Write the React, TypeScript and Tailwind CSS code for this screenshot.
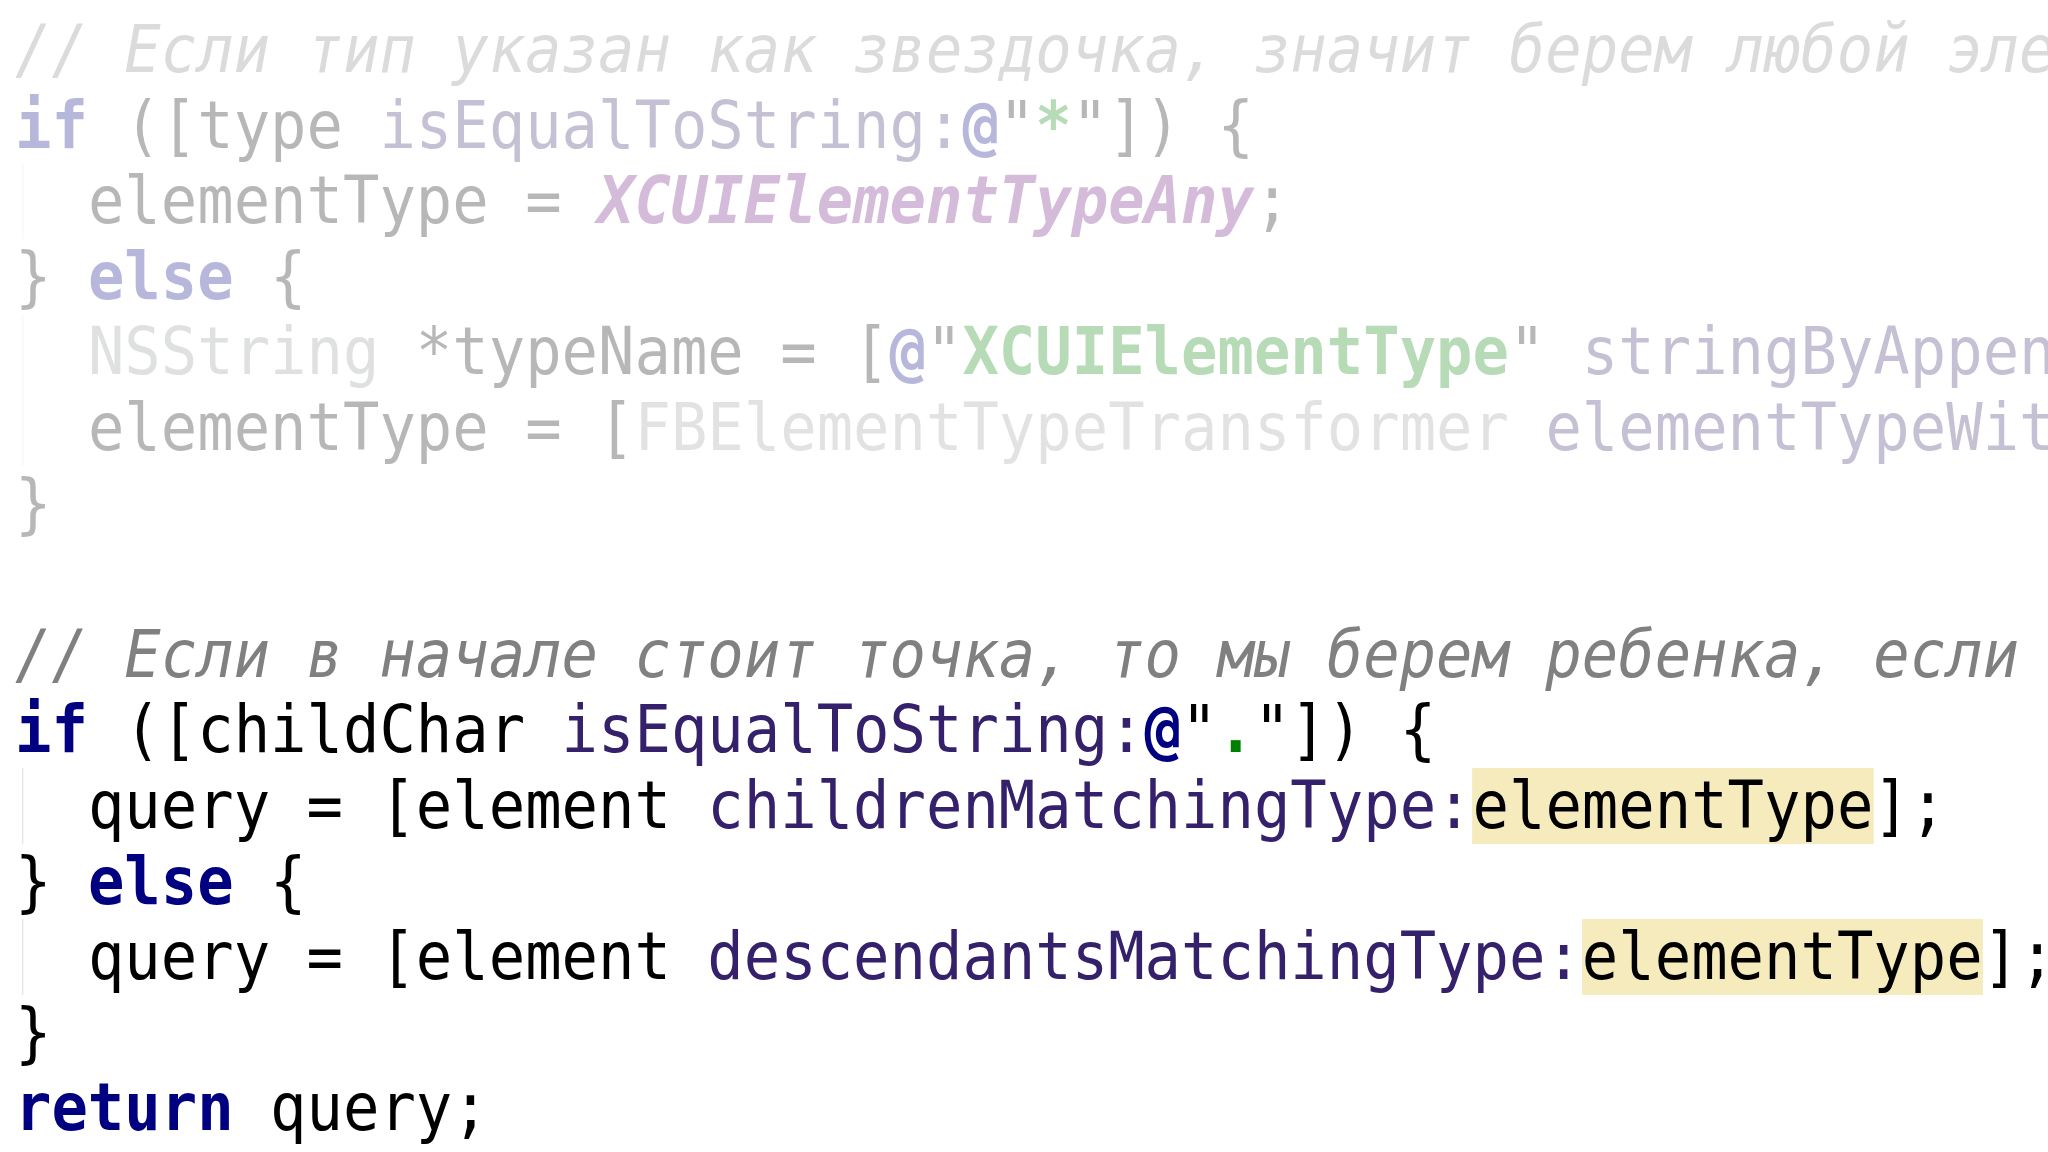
type Tok = { t: string; c?: string };

const kw = 'font-bold text-[#000080]';
const str = 'font-bold text-[#008000]';
const sel = 'text-[#35206b]';
const cmt = 'italic text-[#808080]';
const cst = 'font-bold italic text-[#660e7a]';
const cls = 'text-[#8a968f]';
const cls2 = 'text-[#9b9b9b]';
const at = 'font-bold text-[#000080]';
const hl = 'bg-[#f6ebbd]';

const IND = '__indent__';

const top: Tok[][] = [
  [{ t: '// Если тип указан как звездочка, значит берем любой элемент', c: cmt }],
  [
    { t: 'if', c: kw },
    { t: ' ([type ' },
    { t: 'isEqualToString:', c: sel },
    { t: '@', c: at },
    { t: '"' },
    { t: '*', c: str },
    { t: '"]) {' },
  ],
  [{ t: IND }, { t: 'elementType = ' }, { t: 'XCUIElementTypeAny', c: cst }, { t: ';' }],
  [{ t: '} ' }, { t: 'else', c: kw }, { t: ' {' }],
  [
    { t: IND },
    { t: 'NSString', c: cls },
    { t: ' *typeName = [' },
    { t: '@', c: at },
    { t: '"' },
    { t: 'XCUIElementType', c: str },
    { t: '" ' },
    { t: 'stringByAppendingString:', c: sel },
    { t: 'type];' },
  ],
  [
    { t: IND },
    { t: 'elementType = [' },
    { t: 'FBElementTypeTransformer', c: cls2 },
    { t: ' ' },
    { t: 'elementTypeWithTypeName:', c: sel },
    { t: 'typeName];' },
  ],
  [{ t: '}' }],
  [{ t: ' ' }],
];

const bottom: Tok[][] = [
  [{ t: '// Если в начале стоит точка, то мы берем ребенка, если нет, то любого потомка', c: cmt }],
  [
    { t: 'if', c: kw },
    { t: ' ([childChar ' },
    { t: 'isEqualToString:', c: sel },
    { t: '@', c: at },
    { t: '"' },
    { t: '.', c: str },
    { t: '"]) {' },
  ],
  [
    { t: IND },
    { t: 'query = [element ' },
    { t: 'childrenMatchingType:', c: sel },
    { t: 'elementType', c: hl },
    { t: '];' },
  ],
  [{ t: '} ' }, { t: 'else', c: kw }, { t: ' {' }],
  [
    { t: IND },
    { t: 'query = [element ' },
    { t: 'descendantsMatchingType:', c: sel },
    { t: 'elementType', c: hl },
    { t: '];' },
  ],
  [{ t: '}' }],
  [{ t: 'return', c: kw }, { t: ' query;' }],
];

function Line({ toks }: { toks: Tok[] }) {
  return (
    <div className="flex h-[75.6px] items-stretch whitespace-pre leading-[75.6px] origin-left scale-x-[0.917]">
      {toks.map((tk, i) =>
        tk.t === IND ? (
          <span key={i} className="ml-[8px] -mr-[9px] border-l border-[#dcdcdc] whitespace-pre">
            {'  '}
          </span>
        ) : (
          <span key={i} className={`whitespace-pre ${tk.c ?? ''}`}>
            {tk.t}
          </span>
        )
      )}
    </div>
  );
}

export default function App() {
  return (
    <div className="w-[2048px] h-[1152px] overflow-hidden bg-white text-black">
      <div className="pl-[15px] pt-[12px] font-['DejaVu_Sans_Mono','Liberation_Mono',monospace] text-[66px]">
        <div className="opacity-[0.28]">
          {top.map((l, i) => (
            <Line key={i} toks={l} />
          ))}
        </div>
        <div>
          {bottom.map((l, i) => (
            <Line key={i} toks={l} />
          ))}
        </div>
      </div>
    </div>
  );
}
